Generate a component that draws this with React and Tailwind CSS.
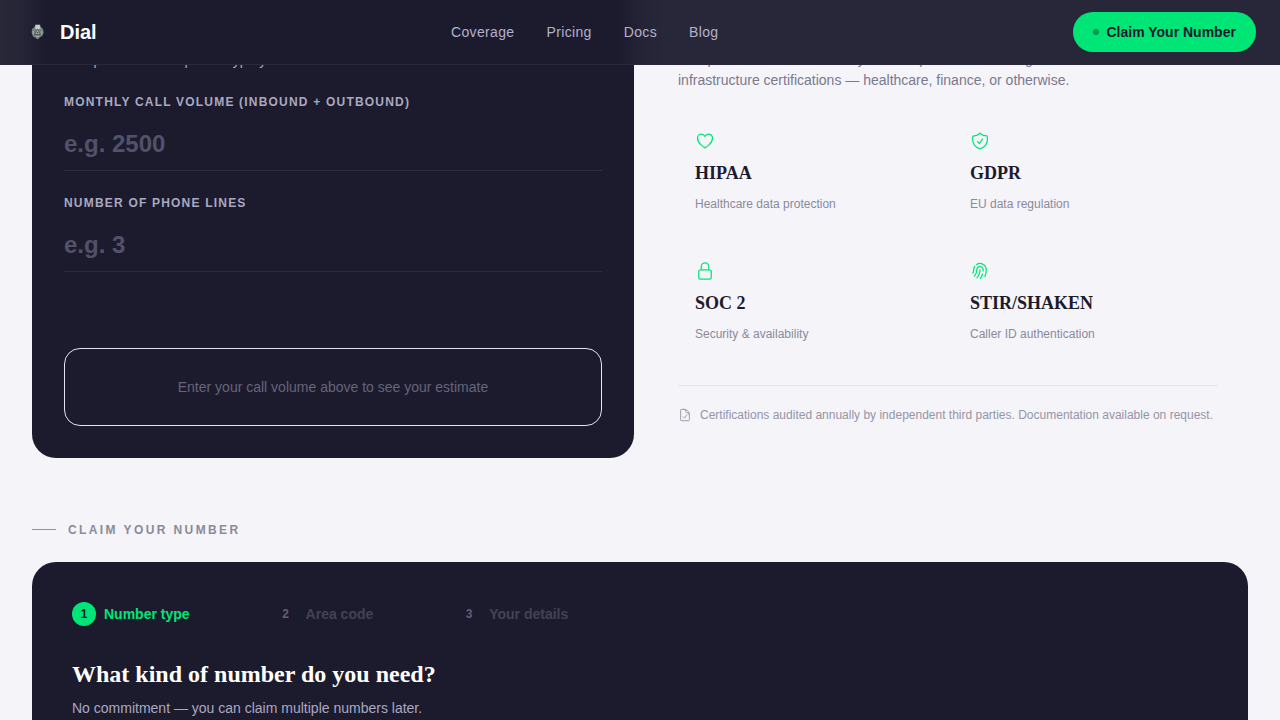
import { HiOutlineHeart, HiOutlineShieldCheck, HiOutlineLockClosed, HiOutlineFingerPrint, HiOutlineDocumentCheck } from 'react-icons/hi2';

const certs = [
  { name: 'HIPAA', note: 'Healthcare data protection', Icon: HiOutlineHeart },
  { name: 'GDPR', note: 'EU data regulation', Icon: HiOutlineShieldCheck },
  { name: 'SOC 2', note: 'Security & availability', Icon: HiOutlineLockClosed },
  { name: 'STIR/SHAKEN', note: 'Caller ID authentication', Icon: HiOutlineFingerPrint },
];

function Cert({ name, note, Icon }) {
  return (
    <div className="h-[130px] pl-[17px] pt-[17px]">
      <Icon size={20} className="block text-[#00e676]" />
      <h3 className="mt-2 font-['Liberation_Serif',serif] text-[18px] leading-7 font-bold text-[#1c1b2e]">{name}</h3>
      <p className="mt-[7px] text-xs leading-5 text-[#8b8a9c]">{note}</p>
    </div>
  );
}

function Field({ label, value }) {
  return (
    <div className="h-[101px]">
      <div className="text-xs leading-4 font-bold tracking-[1.2px] text-[#aaa8c0]">{label}</div>
      <div className="mt-[15px] h-[46px] border-b border-[#2d2c40] pt-[3px] text-2xl leading-8 font-bold text-[#52516a]">{value}</div>
    </div>
  );
}

function Step({ n, label, active, className }) {
  return (
    <div className={'flex items-center gap-2 ' + className}>
      <span className={'flex h-6 w-6 items-center justify-center rounded-full text-xs font-bold ' + (active ? 'bg-[#00e676] text-[#1c1b2e]' : 'text-[#605f73]')}>{n}</span>
      <span className={'text-sm font-bold ' + (active ? 'text-[#00e676]' : 'text-[#434255]')}>{label}</span>
    </div>
  );
}

export default function App() {
  return (
    <div className="relative h-[720px] overflow-hidden bg-[#f4f4f9] font-['Liberation_Sans',Arial,sans-serif]">
      <header className="absolute inset-x-0 top-0 z-10 flex h-[65px] items-center border-b border-[#2a293b] bg-[linear-gradient(90deg,#292839_0px,#262537_20px,#1c1b2e_46px,#1c1b2e_618px,#242336_640px,#28273a_665px)] pb-px">
        <div className="flex w-[451px] items-center pl-[31px]">
          <svg width="13" height="16" viewBox="0 0 13 16" className="mr-4">
            <path d="M4.500 .5h4.500l.8 2.500L12 5l.7 3.500-1.500 3.500-2 1-2.500 2.500L4 13.500 2 12.500.7 9 1 5l2.500-2Z" fill="#7b817d" />
            <path d="M4.500 1h4.200l.8 3.500-3 1.200-2.500-1.200Z" fill="#bdd0c5" />
            <path d="m6.500 5 2.800 5.500H3.700Z" fill="#c3cac2" stroke="#3e4347" strokeWidth=".8" />
            <path d="M2.200 7v3.500m8.500-3.500v3.500M5 12.500h3" stroke="#a4ada5" />
            <circle cx="6.500" cy="8.700" r="1" fill="#4a504e" />
          </svg>
          <span className="text-xl font-bold text-white">Dial</span>
        </div>
        <nav className="flex gap-8 text-sm tracking-[0.35px] text-[#b3b1c9]">
          <a>Coverage</a><a>Pricing</a><a>Docs</a><a>Blog</a>
        </nav>
        <button className="mr-6 ml-auto flex h-10 w-[183px] items-center rounded-full bg-[#00e676] pl-5 text-sm font-bold text-[#1c1b2e]">
          <span className="mr-[7.5px] h-1.5 w-1.5 rounded-full bg-[#0e8f53]" />
          <span className="whitespace-nowrap">Claim Your Number</span>
        </button>
      </header>
      <main className="px-8">
        <div className="flex h-[458px]">
          <section className="w-[602px] rounded-b-3xl bg-[#1c1b2e] px-8 pt-[50px]">
            <p className="h-11 text-sm leading-5 text-[#aaa8c0]">Compared to other picked type you</p>
            <Field label="MONTHLY CALL VOLUME (INBOUND + OUTBOUND)" value="e.g. 2500" />
            <Field label="NUMBER OF PHONE LINES" value="e.g. 3" />
            <div className="mt-[52px] flex h-[78px] items-center justify-center rounded-2xl border border-[#e3e2f2] text-sm text-[#65647a]">Enter your call volume above to see your estimate</div>
          </section>
          <section className="ml-11 w-[540px] pt-[49px]">
            <p className="text-sm leading-[21px] text-[#7a798e]">Compliance contracts security and the processes and log<br />infrastructure certifications — healthcare, finance, or otherwise.</p>
            <div className="mt-[23px] grid grid-cols-[275px_265px]">
              {certs.map((c) => <Cert key={c.name} {...c} />)}
            </div>
            <div className="mt-[11px] flex items-center border-t border-[#e5e5ec] pt-[21px] text-xs leading-4 whitespace-nowrap text-[#9694a7]">
              <HiOutlineDocumentCheck size={14} className="mr-2 shrink-0" />
              Certifications audited annually by independent third parties. Documentation available on request.
            </div>
          </section>
        </div>
        <div className="mt-16 flex h-4 items-center text-xs font-bold tracking-[2.4px] text-[#8c8a99]">
          <span className="mr-3 mb-[2px] h-px w-6 bg-[#00e676]" />CLAIM YOUR NUMBER
        </div>
        <section className="mt-6 h-40 rounded-t-3xl bg-[#1c1b2e] px-10 pt-10">
          <div className="flex h-6 items-center">
            <Step n="1" label="Number type" active className="w-[201.6px]" />
            <Step n="2" label="Area code" className="w-[183.6px]" />
            <Step n="3" label="Your details" className="" />
          </div>
          <h2 className="mt-8 font-['Liberation_Serif',serif] text-2xl leading-8 font-bold text-white">What kind of number do you need?</h2>
          <p className="mt-2 text-sm leading-5 text-[#aaa8c0]">No commitment — you can claim multiple numbers later.</p>
        </section>
      </main>
    </div>
  );
}
